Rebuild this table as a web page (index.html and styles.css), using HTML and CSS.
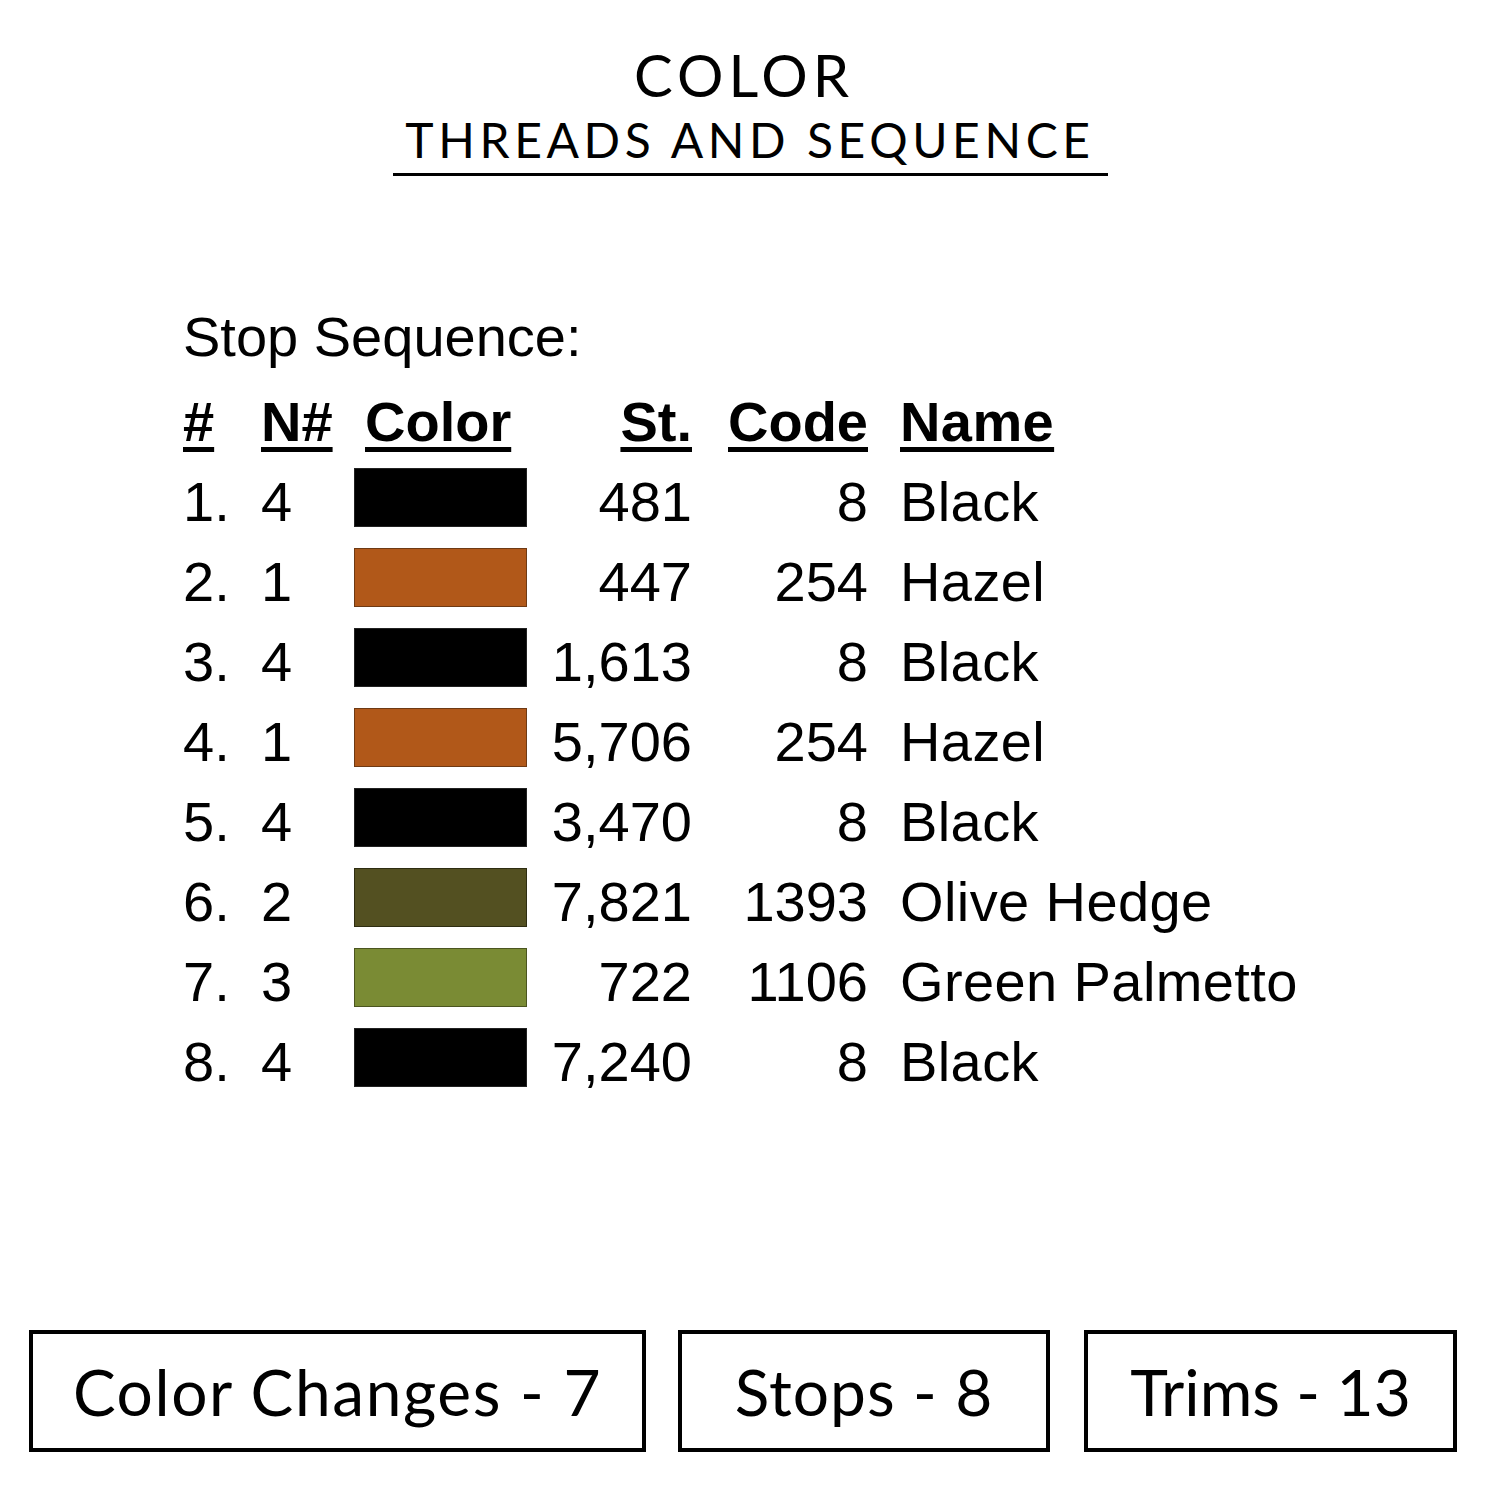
FILE: index.html
```html
<!DOCTYPE html>
<html>
<head>
<meta charset="utf-8">
<link rel="stylesheet" href="styles.css">
</head>
<body>
<div class="page">
  <header class="head">
    <div class="title">COLOR</div>
    <div class="subtitle">THREADS AND SEQUENCE</div>
  </header>

  <section class="seq">
    <div class="seq-title">Stop Sequence:</div>
    <div class="grid">
      <div class="th c1"><u>#</u></div>
      <div class="th c2"><u>N#</u></div>
      <div class="th c3"><u>Color</u></div>
      <div class="th c4"><u>St.</u></div>
      <div class="th c5"><u>Code</u></div>
      <div class="th c6"><u>Name</u></div>

      <div class="td c1">1.</div><div class="td c2">4</div><div class="td c3"><span class="sw black"></span></div><div class="td c4">481</div><div class="td c5">8</div><div class="td c6">Black</div>
      <div class="td c1">2.</div><div class="td c2">1</div><div class="td c3"><span class="sw hazel"></span></div><div class="td c4">447</div><div class="td c5">254</div><div class="td c6">Hazel</div>
      <div class="td c1">3.</div><div class="td c2">4</div><div class="td c3"><span class="sw black"></span></div><div class="td c4">1,613</div><div class="td c5">8</div><div class="td c6">Black</div>
      <div class="td c1">4.</div><div class="td c2">1</div><div class="td c3"><span class="sw hazel"></span></div><div class="td c4">5,706</div><div class="td c5">254</div><div class="td c6">Hazel</div>
      <div class="td c1">5.</div><div class="td c2">4</div><div class="td c3"><span class="sw black"></span></div><div class="td c4">3,470</div><div class="td c5">8</div><div class="td c6">Black</div>
      <div class="td c1">6.</div><div class="td c2">2</div><div class="td c3"><span class="sw olive"></span></div><div class="td c4">7,821</div><div class="td c5">1393</div><div class="td c6">Olive Hedge</div>
      <div class="td c1">7.</div><div class="td c2">3</div><div class="td c3"><span class="sw palm"></span></div><div class="td c4">722</div><div class="td c5">1106</div><div class="td c6">Green Palmetto</div>
      <div class="td c1">8.</div><div class="td c2">4</div><div class="td c3"><span class="sw black"></span></div><div class="td c4">7,240</div><div class="td c5">8</div><div class="td c6">Black</div>
    </div>
  </section>

  <footer class="stats">
    <div class="box box-a">Color Changes - 7</div>
    <div class="box box-b">Stops - 8</div>
    <div class="box box-c">Trims - 13</div>
  </footer>
</div>
</body>
</html>
```

FILE: styles.css
```css
html, body {
  margin: 0;
  padding: 0;
  background: #fff;
}
.page {
  width: 1500px;
  height: 1500px;
  display: flex;
  flex-direction: column;
  color: #000;
}
.head {
  display: flex;
  flex-direction: column;
  align-items: center;
  font-family: Lato, "Open Sans", sans-serif;
  padding-top: 40px;
}
.title {
  font-size: 58px;
  line-height: 70px;
  letter-spacing: 5px;
  margin-left: -12px;
}
.subtitle {
  width: 715px;
  text-align: center;
  font-size: 48px;
  line-height: 60px;
  letter-spacing: 4.6px;
  padding-bottom: 3px;
  border-bottom: 3px solid #000;
}
.seq {
  font-family: "Liberation Sans", Arial, sans-serif;
  font-size: 56px;
  padding-left: 183px;
  margin-top: 121px;
}
.seq-title {
  line-height: 80px;
  margin-bottom: 5px;
}
.grid {
  display: grid;
  grid-template-columns: 78px 93px 173px 165px 176px auto;
  grid-auto-rows: 80px;
  line-height: 80px;
}
.th {
  font-weight: bold;
  height: 78px;
}
.th u {
  text-decoration-thickness: 5px;
  text-underline-offset: 6px;
}
.c3.th { padding-left: 11px; }
.c4, .c5 { text-align: right; }
.c6 { padding-left: 32px; white-space: nowrap; letter-spacing: 0.4px; }
.td.c3 { display: flex; align-items: flex-start; }
.sw {
  display: block;
  width: 173px;
  height: 59px;
  margin-top: 6px;
  box-sizing: border-box;
  border: 1px solid #222;
}
.black { background: #000; }
.hazel { background: #b15819; border-color: #6e3a14; }
.olive { background: #535021; border-color: #2e2d12; }
.palm { background: #7a8b34; border-color: #4b5520; }

.stats {
  margin-top: auto;
  margin-bottom: 48px;
  display: flex;
  padding-left: 29px;
  font-family: Lato, "Open Sans", sans-serif;
}
.box {
  box-sizing: border-box;
  height: 122px;
  border: 4px solid #000;
  display: flex;
  align-items: center;
  justify-content: center;
  font-size: 64px;
  letter-spacing: 1px;
}
.box-a { width: 617px; letter-spacing: 1.6px; }
.box-b { width: 372px; margin-left: 32px; }
.box-c { width: 373px; margin-left: 34px; letter-spacing: 0; }
```
